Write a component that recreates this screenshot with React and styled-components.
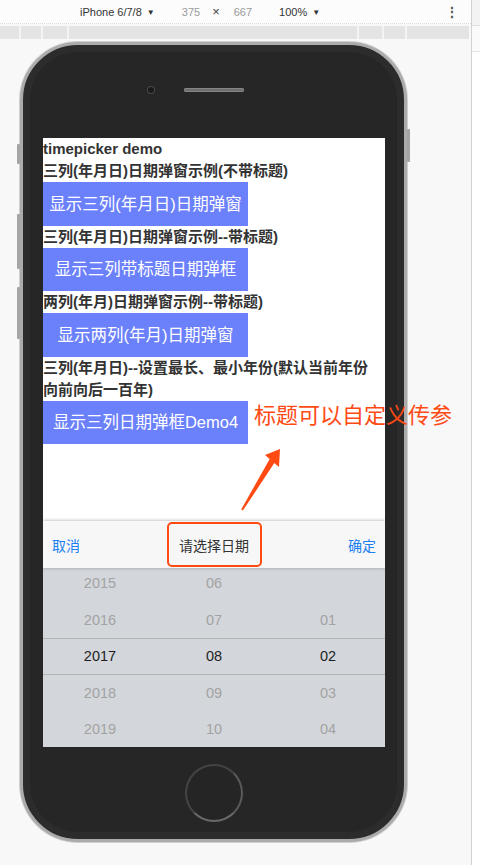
import React from "react";
import styled, { createGlobalStyle } from "styled-components";

const rulerMarks = [21, 22, 26, 290, 25, 23, 62];

const demos = [
  { label: "三列(年月日)日期弹窗示例(不带标题)", button: "显示三列(年月日)日期弹窗" },
  { label: "三列(年月日)日期弹窗示例--带标题)", button: "显示三列带标题日期弹框" },
  { label: "两列(年月)日期弹窗示例--带标题)", button: "显示两列(年月)日期弹窗" },
  {
    label: ["三列(年月日)--设置最长、最小年份(默认当前年份", "向前向后一百年)"],
    button: "显示三列日期弹框Demo4",
  },
];

const wheelRows = [
  ["2015", "06", ""],
  ["2016", "07", "01"],
  ["2017", "08", "02"],
  ["2018", "09", "03"],
  ["2019", "10", "04"],
];

function App() {
  return (
    <Page>
      <GlobalStyle />
      <Workspace>
        <Toolbar>
          <ToolText>
            iPhone 6/7/8 <Caret>▼</Caret>
          </ToolText>
          <Dim gap={27}>375</Dim>
          <Times>×</Times>
          <Dim gap={14}>667</Dim>
          <ToolText gap={27}>
            100% <Caret>▼</Caret>
          </ToolText>
          <Kebab>⋮</Kebab>
        </Toolbar>
        <Ruler>
          {rulerMarks.map((w, i) => (
            <RulerSegment key={i} w={w} />
          ))}
        </Ruler>
        <Stage>
          <Phone>
            <SideKey left top={99} h={20} />
            <SideKey left top={169} h={55} />
            <SideKey left top={242} h={52} />
            <SideKey top={84} h={33} />
            <TopBezel>
              <Camera />
              <Speaker />
              <span />
            </TopBezel>
            <Screen>
              <Content>
                <Heading>timepicker demo</Heading>
                {demos.map((d, i) => (
                  <Demo key={i}>
                    <Label>
                      {Array.isArray(d.label) ? (
                        <>
                          {d.label[0]}
                          <br />
                          {d.label[1]}
                        </>
                      ) : (
                        d.label
                      )}
                    </Label>
                    <DemoButton>{d.button}</DemoButton>
                  </Demo>
                ))}
              </Content>
              <Picker>
                <PickerHeader>
                  <HeaderAction>取消</HeaderAction>
                  <PickerTitle>请选择日期</PickerTitle>
                  <HeaderAction>确定</HeaderAction>
                </PickerHeader>
                <Wheel>
                  {wheelRows.map((row, i) => (
                    <WheelRow key={i} active={i === 2}>
                      {row.map((v, j) => (
                        <WheelCell key={j} active={i === 2}>
                          {v}
                        </WheelCell>
                      ))}
                    </WheelRow>
                  ))}
                </Wheel>
              </Picker>
            </Screen>
            <BottomBezel>
              <HomeButton />
            </BottomBezel>
          </Phone>
        </Stage>
      </Workspace>
      <SidePanel>
        <PanelHead />
        <PanelRow />
      </SidePanel>
      <Note>标题可以自定义传参</Note>
      <ArrowMark viewBox="0 0 50 72" width="50" height="72">
        <polygon points="44,5 43,23 38.3,19 6.8,66.6 5.2,65.4 33.7,15 29,11" />
      </ArrowMark>
    </Page>
  );
}

export default App;

const GlobalStyle = createGlobalStyle`
  html, body {
    margin: 0;
    padding: 0;
  }
  body {
    background: #f8f8f8;
    font-family: "Liberation Sans", "Noto Sans CJK SC", sans-serif;
  }
  * {
    box-sizing: border-box;
  }
`;

const Page = styled.div`
  position: relative;
  display: flex;
  width: 480px;
  height: 865px;
  overflow: hidden;
  background: #f8f8f8;
`;

const Workspace = styled.div`
  width: 471px;
  display: flex;
  flex-direction: column;
`;

const Toolbar = styled.div`
  height: 24px;
  display: flex;
  align-items: center;
  padding-left: 80px;
  background: #fcfcfc;
  border-bottom: 1px dotted #dcdcdc;
  font-size: 11px;
  color: #333;
`;

const ToolText = styled.span`
  margin-left: ${(p) => p.gap || 0}px;
  white-space: nowrap;
`;

const Caret = styled.span`
  font-size: 8px;
  margin-left: 2px;
  vertical-align: 1px;
`;

const Dim = styled.span`
  margin-left: ${(p) => p.gap}px;
  color: #9a9a9a;
`;

const Times = styled.span`
  margin-left: 12px;
  font-size: 13px;
  color: #444;
`;

const Kebab = styled.span`
  margin-left: auto;
  margin-right: 12px;
  font-size: 14px;
  font-weight: bold;
  color: #555;
`;

const Ruler = styled.div`
  display: flex;
  height: 13px;
  margin-top: 2px;
  width: 469px;
`;

const RulerSegment = styled.div`
  width: ${(p) => p.w}px;
  background: #e4e4e4;
  border-right: 2px solid #f4f4f4;
  &:last-child {
    border-right: none;
  }
`;

const Stage = styled.div`
  flex: 1;
  padding: 3px 0 0 20px;
`;

const Phone = styled.div`
  position: relative;
  width: 387px;
  height: 800px;
  border-radius: 58px;
  border: 3px solid #ababab;
  background: #262626;
  box-shadow: 0 0 0 1px #cfcfcf, inset 0 0 0 7px #2c2c2c;
  display: flex;
  flex-direction: column;
  align-items: center;
`;

const SideKey = styled.div`
  position: absolute;
  ${(p) => (p.left ? "left: -6px;" : "right: -6px;")}
  top: ${(p) => p.top}px;
  width: 3px;
  height: ${(p) => p.h}px;
  background: #a5a5a5;
  border-radius: 1px;
`;

const TopBezel = styled.div`
  height: 93px;
  width: 100%;
  display: grid;
  grid-template-columns: 1fr 60px 1fr;
  align-items: center;
  padding-bottom: 4px;
`;

const Camera = styled.span`
  justify-self: end;
  margin-right: 30px;
  width: 6px;
  height: 6px;
  border-radius: 50%;
  background: #1a1a1a;
  box-shadow: 0 0 0 1px #4a4a4a;
`;

const Speaker = styled.span`
  height: 4px;
  border-radius: 2px;
  background: #6e6e6e;
  box-shadow: inset 0 0 0 1px #858585;
`;

const Screen = styled.div`
  width: 342px;
  height: 609px;
  margin-left: 1px;
  background: #fff;
  display: flex;
  flex-direction: column;
  overflow: hidden;
`;

const Content = styled.div`
  font-size: 15px;
  font-weight: bold;
  line-height: 22px;
  color: #333;
`;

const Heading = styled.div``;

const Demo = styled.div``;

const Label = styled.div`
  white-space: nowrap;
`;

const DemoButton = styled.div`
  width: 205px;
  height: 43.5px;
  display: flex;
  align-items: center;
  justify-content: center;
  background: #6b80fb;
  color: #fff;
  font-size: 16.5px;
  font-weight: normal;
`;

const Picker = styled.div`
  margin-top: auto;
  height: 226px;
  display: flex;
  flex-direction: column;
`;

const PickerHeader = styled.div`
  position: relative;
  z-index: 1;
  height: 47px;
  display: flex;
  align-items: center;
  justify-content: space-between;
  padding: 0 9px;
  background: #f7f7f7;
  box-shadow: 0 -1px 3px rgba(0, 0, 0, 0.2), 0 1px 3px rgba(0, 0, 0, 0.12);
  font-size: 14px;
`;

const HeaderAction = styled.span`
  color: #1b7ff2;
`;

const PickerTitle = styled.span`
  width: 95px;
  height: 45px;
  display: flex;
  align-items: center;
  justify-content: center;
  border: 2px solid #ff4a12;
  border-radius: 5px;
  color: #333;
`;

const Wheel = styled.div`
  flex: 1;
  background: #d3d6da;
  overflow: hidden;
  & > :first-child {
    margin-top: -3px;
  }
`;

const WheelRow = styled.div`
  height: 36.5px;
  display: grid;
  grid-template-columns: repeat(3, 1fr);
  align-items: center;
  border-top: 1px solid ${(p) => (p.active ? "#b3b3b3" : "transparent")};
  border-bottom: 1px solid ${(p) => (p.active ? "#b3b3b3" : "transparent")};
`;

const WheelCell = styled.span`
  text-align: center;
  font-size: 14.5px;
  color: ${(p) => (p.active ? "#1e1e1e" : "#a3a3a3")};
`;

const BottomBezel = styled.div`
  flex: 1;
  width: 100%;
  display: flex;
  align-items: center;
  justify-content: center;
`;

const HomeButton = styled.div`
  width: 58px;
  height: 58px;
  margin-left: 1px;
  border-radius: 50%;
  border: 2px solid #444;
  border-bottom-color: #6a6a6a;
  border-right-color: #5a5a5a;
  background: #252525;
`;

const SidePanel = styled.div`
  flex: 1;
  background: #fff;
  border-left: 1px solid #d2d2d2;
`;

const PanelHead = styled.div`
  height: 26px;
  background: #f3f3f3;
  border-bottom: 1px solid #dedede;
`;

const PanelRow = styled.div`
  height: 26px;
  background: #fafafa;
  border-bottom: 1px solid #e4e4e4;
`;

const Note = styled.div`
  position: absolute;
  left: 254px;
  top: 400px;
  font-family: "Noto Sans CJK SC", sans-serif;
  font-size: 22px;
  line-height: 26px;
  color: #ff4a13;
  white-space: nowrap;
`;

const ArrowMark = styled.svg`
  position: absolute;
  left: 236px;
  top: 444px;
  fill: #ff4a13;
`;
